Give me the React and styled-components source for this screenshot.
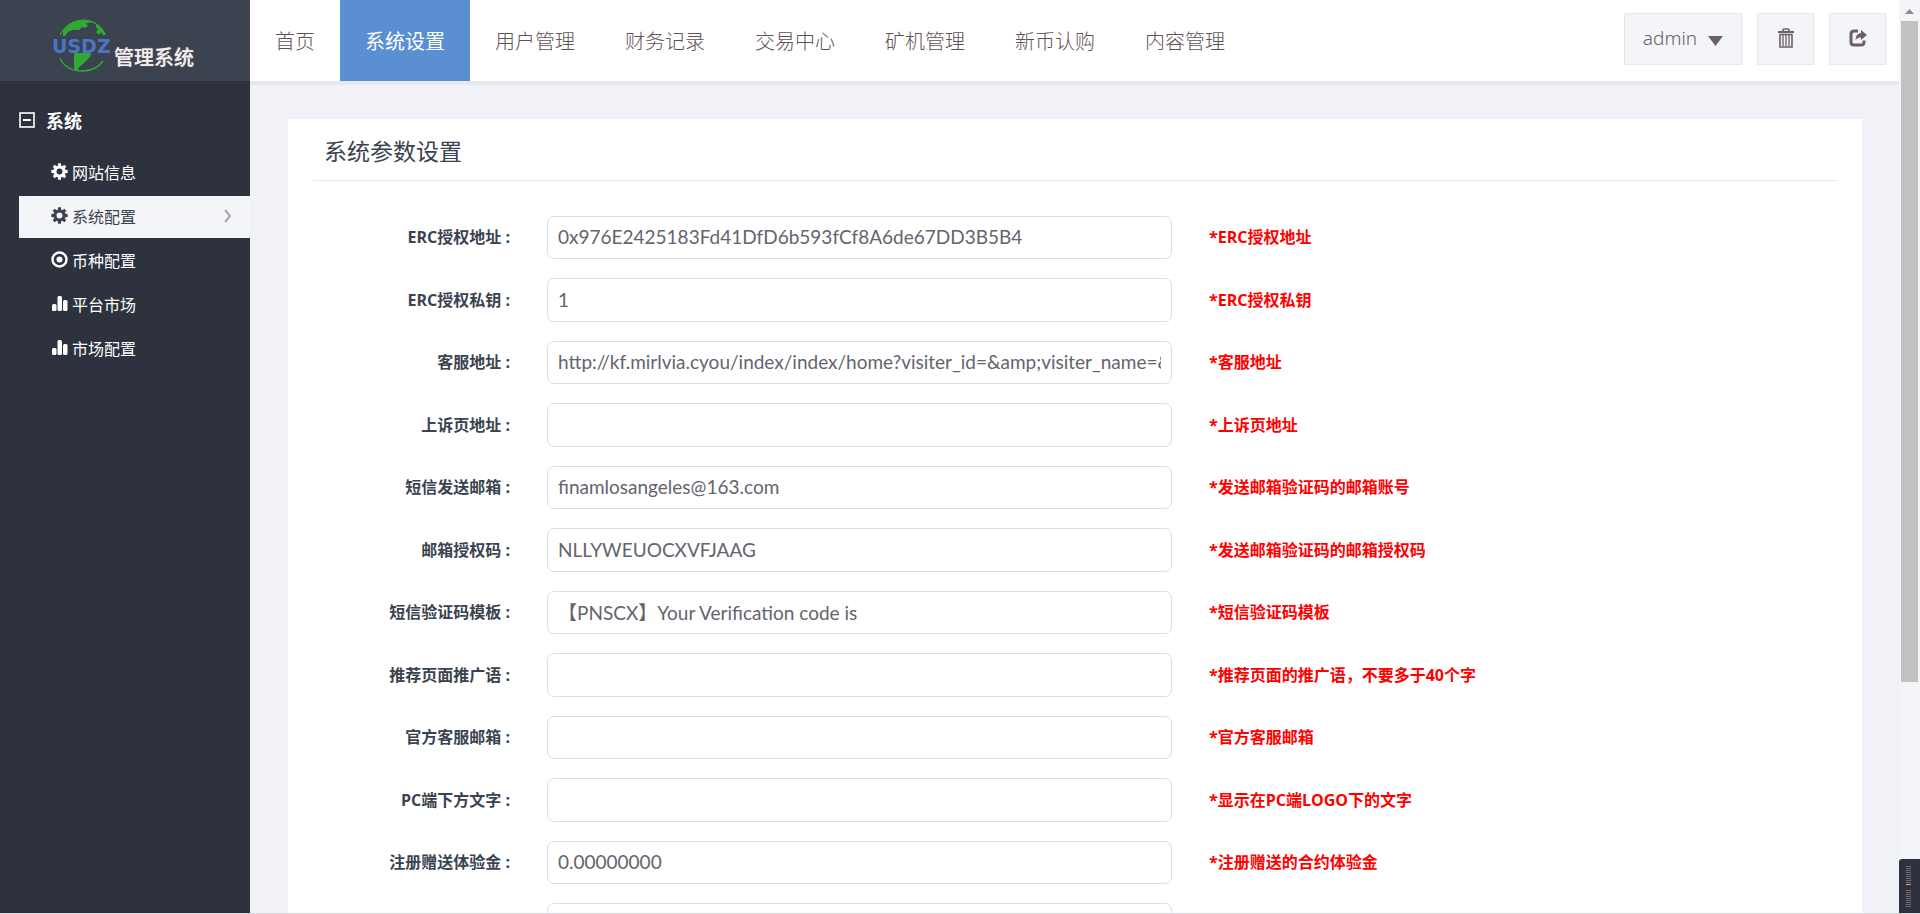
import React from 'react';
import styled, { createGlobalStyle, css } from 'styled-components';

const cjk = '"Noto Sans CJK SC", sans-serif';
const ink = '#3a4350';
const taupe = '#6c6065';

const Global = createGlobalStyle`
  * { box-sizing: border-box; }
  body { margin: 0; background: #f0f2f7; font-family: "Open Sans", ${cjk}; font-size: 16px; color: ${ink}; }
  a { color: inherit; text-decoration: none; }
  button, input { font: inherit; color: inherit; margin: 0; }
`;

const Shell = styled.div`
  display: flex;
  height: 100vh;
  overflow: hidden;
  border-bottom: 1px solid #d6d7db;
`;
const Sidebar = styled.aside`
  flex: 0 0 250px;
  background: #2d323e;
  color: #fff;
`;
const Brand = styled.a`
  display: flex;
  align-items: flex-start;
  height: 81px;
  padding: 19px 0 0 53px;
  background: #3a434f;
`;
const Emblem = styled.svg`
  flex: none;
  width: 58px;
  height: 54px;
  overflow: visible;
`;
const BrandName = styled.span`
  margin: 24px 0 0 3px;
  font: 500 20px/28px ${cjk};
  color: #f0eeee;
  text-shadow: 0 0 1px #d8b8ae;
`;
const GroupTitle = styled.h2`
  display: flex;
  align-items: center;
  gap: 11px;
  height: 42px;
  margin: 18px 0 11px;
  padding-left: 19px;
  font-size: 18px;
  font-weight: 700;
`;
const SideList = styled.nav`
  display: flex;
  flex-direction: column;
  gap: 2px;
  padding-left: 19px;
`;
const SideLink = styled.a`
  display: flex;
  align-items: center;
  gap: 4px;
  height: 42px;
  padding: 0 18px 3px 32px;
  ${p => p.$active && css`background: #f4f5f9; color: ${ink};`}
`;
const Chevron = styled.svg`
  width: 8px;
  height: 14px;
  margin-left: auto;
`;

const Main = styled.main`
  display: flex;
  flex-direction: column;
  flex: 1;
  min-width: 0;
`;
const TopBar = styled.header`
  display: flex;
  justify-content: space-between;
  flex: none;
  height: 85px;
  background: #fff;
  border-bottom: 4px solid #e6e8ee;
`;
const Tabs = styled.nav`
  display: flex;
`;
const Tab = styled.a`
  display: flex;
  align-items: center;
  padding: 0 25px;
  font: 300 20px/28px ${cjk};
  color: #5f5257;
  ${p => p.$active && css`background: #5a8fd2; color: #fff; font-weight: 400;`}
`;
const Tools = styled.div`
  display: flex;
  gap: 15px;
  padding: 13px 13px 0 0;
`;
const Tool = styled.button`
  display: flex;
  align-items: center;
  justify-content: center;
  gap: 11px;
  width: ${p => (p.$wide ? 118 : 57)}px;
  height: 52px;
  padding: 0 0 3px;
  border: 1px solid #e6e8ee;
  background: #f4f5f9;
  color: ${taupe};
  font-size: 19px;
  font-family: "Noto Sans", sans-serif;
  font-weight: 300;
`;
const Caret = styled.svg`
  width: 15px;
  height: 10px;
  margin-top: 6px;
`;
const Panel = styled.section`
  flex: 1;
  min-height: 0;
  overflow: hidden;
  margin: 34px 37px 0 38px;
  padding: 0 25px;
  background: #fff;
`;
const Title = styled.h1`
  height: 62px;
  margin: 0;
  padding: 15px 11px 0;
  border-bottom: 1px solid #e6e8ee;
  font: 400 23px/32px ${cjk};
`;
const Form = styled.form`
  padding-top: 35px;
`;
const Field = styled.div`
  display: flex;
  align-items: center;
  height: 43px;
  margin-bottom: 19px;
  font-weight: 700;
  white-space: nowrap;
  &:nth-child(even) { height: 44px; }
`;
const Label = styled.label`
  flex: 0 0 197px;
  margin-right: 37px;
  padding-bottom: 3px;
  text-align: right;
`;
const Input = styled.input`
  flex: 0 1 625px;
  min-width: 0;
  height: 100%;
  padding: 0 10px 2px;
  border: 1px solid #dcdee3;
  border-radius: 7px;
  background: #fff;
  color: #65636e;
  font: 400 19px/28px Lato, ${cjk};
`;
const Hint = styled.span`
  margin-left: 37px;
  padding-bottom: 3px;
  color: #f00;
`;

const Rail = styled.div`
  position: relative;
  flex: 0 0 21px;
  padding: 8px 2px 0;
  background: #f3f4f7;
`;
const UpArrow = styled.svg`
  display: block;
  width: 9px;
  height: 6px;
  margin: 0 4px 7px;
`;
const Thumb = styled.div`
  height: 73%;
  background: #c1c1c1;
`;
const Meter = styled.div`
  position: absolute;
  right: 0;
  bottom: 0;
  display: flex;
  flex-direction: column;
  gap: 1px;
  width: 21px;
  height: 54px;
  padding: 7px 0 0 7px;
  border-radius: 3px 0 0 0;
  background: #2d323e;
`;
const Tick = styled.i`
  width: 5px;
  height: 1px;
  background: ${p => (p.$hot ? '#f0a03c' : '#77686e')};
  margin-bottom: ${p => (p.$hot ? 4 : 0)}px;
`;

const GearIcon = () => (
  <svg width="17" height="17" viewBox="0 0 16 16" aria-hidden="true">
    <g fill="currentColor">
      {[0, 45, 90, 135, 180, 225, 270, 315].map(a => (
        <path key={a} d="M6.200 4L6.700 0.300H9.300L9.800 4Z" transform={`rotate(${a} 8 8)`} />
      ))}
    </g>
    <circle cx="8" cy="8" r="4.200" fill="none" stroke="currentColor" strokeWidth="2.800" />
  </svg>
);
const TargetIcon = () => (
  <svg width="17" height="17" viewBox="0 0 17 17" aria-hidden="true">
    <circle cx="8.500" cy="8.500" r="7" fill="none" stroke="currentColor" strokeWidth="2.400" />
    <circle cx="8.500" cy="8.500" r="3" fill="currentColor" />
  </svg>
);
const BarsIcon = () => (
  <svg width="17" height="17" viewBox="0 0 17 17" fill="currentColor" aria-hidden="true">
    <rect x="1" y="9" width="4.500" height="7" rx="1.500" />
    <rect x="6.500" y="1" width="4.500" height="15" rx="1.500" />
    <rect x="12" y="5" width="4.500" height="11" rx="1.500" />
  </svg>
);
const MinusBox = () => (
  <svg width="16" height="16" viewBox="0 0 16 16" aria-hidden="true">
    <rect x="1" y="1" width="14" height="14" fill="none" stroke="#fff" strokeWidth="1.600" />
    <rect x="4" y="7" width="8" height="2" fill="#fff" />
  </svg>
);
const TrashIcon = () => (
  <svg width="16" height="20" viewBox="0 0 16 20" fill="none" stroke="currentColor" aria-hidden="true">
    <path d="M5 3V1.700Q5 1 6 1H10Q11 1 11 1.700V3" strokeWidth="1.600" />
    <path d="M0 4H16" strokeWidth="2" />
    <path d="M2 6.500H14V19H2Z" strokeWidth="1.600" />
    <path d="M5 7V18M8 7V18M11 7V18" strokeWidth="1.300" />
  </svg>
);
const ShareIcon = () => (
  <svg width="18" height="18" viewBox="0 0 18 18" aria-hidden="true">
    <path d="M9 2H5Q2 2 2 5V13Q2 16 5 16H12Q15 16 15 13V11.500" fill="none" stroke="currentColor" strokeWidth="3" />
    <path d="M12 1L18 6L12 11V8.300Q8.500 8.200 6.500 11Q6.800 4.500 12 4Z" fill="currentColor" />
  </svg>
);
const Globe = () => (
  <Emblem viewBox="0 0 58 54" role="img" aria-label="USDZ">
    <g fill="#2fa834">
      <path d="M10 17V12Q17 2 27 1Q33 0 39 3L36 4H33L35 7L32 9L29 8L26 11L20 11L15 13L12 17Z" />
      <path d="M43 5Q51 9 53 16L50 16L48 13L46 16L43 13L45 11L43 8Z" />
      <path d="M21 34H38L37 38L33 42L30 45L27 47L24 52L21 50Z" />
    </g>
    <path d="M7 39Q13 52 29 52Q43 52 50 42" fill="none" stroke="#2fa834" strokeWidth="1.500" />
    <path d="M7 16Q13 4 26 1.500Q42 -1 50 12" fill="none" stroke="#2fa834" strokeWidth="1.200" />
    <text x="-1" y="34" fontFamily="DejaVu Sans" fontWeight="700" fontSize="19" fill="#4e74c6">USDZ</text>
  </Emblem>
);

const tabs = ['首页', '系统设置', '用户管理', '财务记录', '交易中心', '矿机管理', '新币认购', '内容管理'];
const links = [
  ['网站信息', GearIcon], ['系统配置', GearIcon], ['币种配置', TargetIcon], ['平台市场', BarsIcon], ['市场配置', BarsIcon],
];
const fields = [
  ['ERC授权地址', '0x976E2425183Fd41DfD6b593fCf8A6de67DD3B5B4', 'ERC授权地址'],
  ['ERC授权私钥', '1', 'ERC授权私钥'],
  ['客服地址', 'http://kf.mirlvia.cyou/index/index/home?visiter_id=&amp;visiter_name=&amp;avatar=', '客服地址'],
  ['上诉页地址', '', '上诉页地址'],
  ['短信发送邮箱', 'finamlosangeles@163.com', '发送邮箱验证码的邮箱账号'],
  ['邮箱授权码', 'NLLYWEUOCXVFJAAG', '发送邮箱验证码的邮箱授权码'],
  ['短信验证码模板', '【PNSCX】Your Verification code is', '短信验证码模板'],
  ['推荐页面推广语', '', '推荐页面的推广语，不要多于40个字'],
  ['官方客服邮箱', '', '官方客服邮箱'],
  ['PC端下方文字', '', '显示在PC端LOGO下的文字'],
  ['注册赠送体验金', '0.00000000', '注册赠送的合约体验金'],
];

export default function App() {
  return (
    <Shell>
      <Global />
      <Sidebar>
        <Brand href="#">
          <Globe />
          <BrandName>管理系统</BrandName>
        </Brand>
        <GroupTitle><MinusBox />系统</GroupTitle>
        <SideList>
          {links.map(([name, Icon], i) => (
            <SideLink key={name} href="#" $active={i === 1}>
              <Icon />
              {name}
              {i === 1 && (
                <Chevron viewBox="0 0 8 14"><path d="M1 1L6 7L1 13" fill="none" stroke="#a9a4a6" strokeWidth="2" /></Chevron>
              )}
            </SideLink>
          ))}
        </SideList>
      </Sidebar>
      <Main>
        <TopBar>
          <Tabs>
            {tabs.map((t, i) => <Tab key={t} href="#" $active={i === 1}>{t}</Tab>)}
          </Tabs>
          <Tools>
            <Tool type="button" $wide>
              admin
              <Caret viewBox="0 0 15 10" aria-hidden="true"><path d="M0 0H15L7.500 10Z" fill="currentColor" /></Caret>
            </Tool>
            <Tool type="button" aria-label="清除缓存"><TrashIcon /></Tool>
            <Tool type="button" aria-label="退出"><ShareIcon /></Tool>
          </Tools>
        </TopBar>
        <Panel>
          <Title>系统参数设置</Title>
          <Form>
            {fields.map(([label, value, hint], i) => (
              <Field key={label}>
                <Label htmlFor={`f${i}`}>{label} :</Label>
                <Input id={`f${i}`} type="text" defaultValue={value} />
                <Hint>*{hint}</Hint>
              </Field>
            ))}
            <Field>
              <Label />
              <Input type="text" aria-label="参数" />
            </Field>
          </Form>
        </Panel>
      </Main>
      <Rail>
        <UpArrow viewBox="0 0 9 6"><path d="M0 6L4.500 1L9 6Z" fill="#9a8580" /></UpArrow>
        <Thumb />
        <Meter>
          {Array.from({ length: 19 }, (_, i) => <Tick key={i} $hot={i === 9} />)}
        </Meter>
      </Rail>
    </Shell>
  );
}
